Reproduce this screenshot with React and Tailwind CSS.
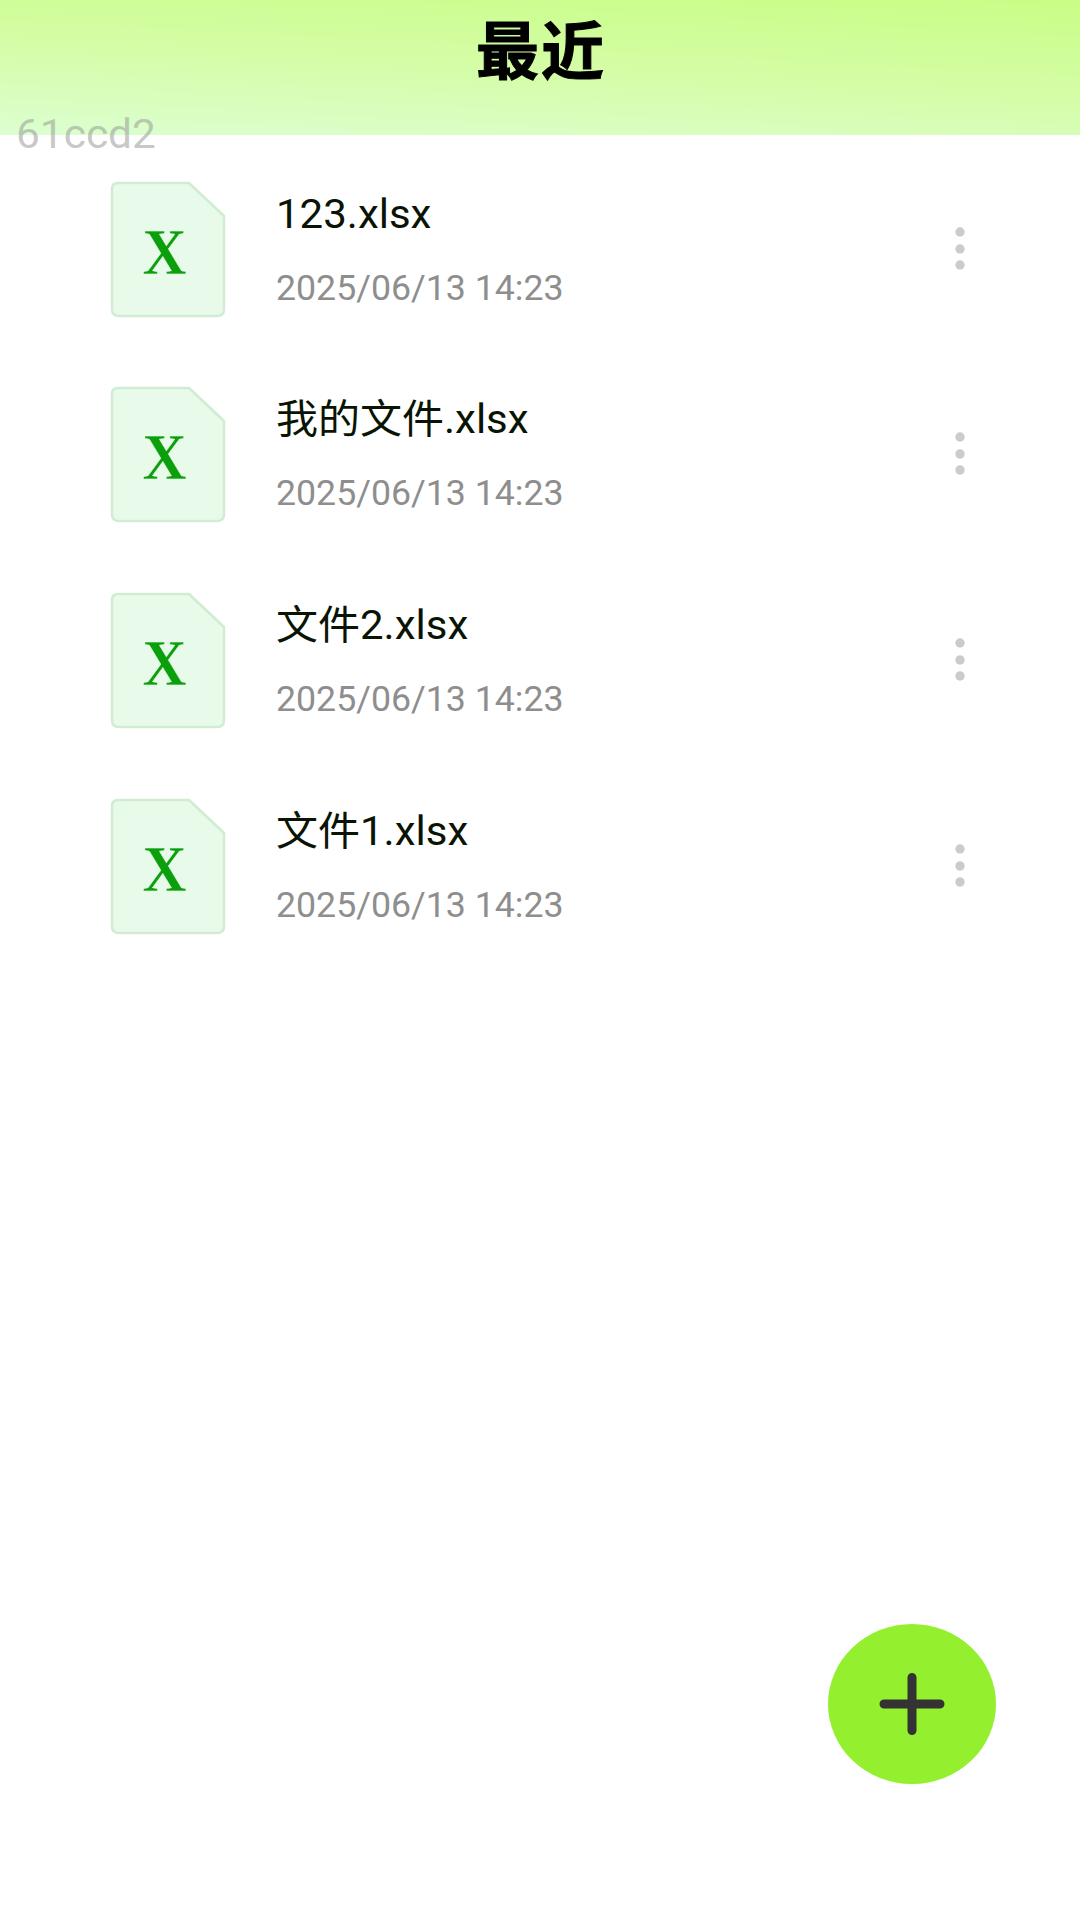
const FILES = [
  { id: 1, name: '123.xlsx', date: '2025/06/13 14:23' },
  { id: 2, name: '我的文件.xlsx', date: '2025/06/13 14:23' },
  { id: 3, name: '文件2.xlsx', date: '2025/06/13 14:23' },
  { id: 4, name: '文件1.xlsx', date: '2025/06/13 14:23' },
];

function SheetIcon() {
  return (
    <svg width="116" height="138" viewBox="0 0 116 138" className="shrink-0">
      <path
        d="M8 2H79L114 35V128Q114 135 107 135H9Q2 135 2 128V8Q2 2 8 2Z"
        fill="#e8faea"
        stroke="#d0edd2"
        strokeWidth="2.5"
        strokeLinejoin="round"
      />
      <text
        transform="translate(54.5 93) scale(0.94 1)"
        textAnchor="middle"
        fontSize="65"
        fontWeight="bold"
        fontFamily="Liberation Serif, serif"
        fill="#0c9f0c"
        stroke="#e8faea"
        strokeWidth="0.4"
      >
        X
      </text>
    </svg>
  );
}

function FileRow({ file }) {
  return (
    <li className="flex h-[205.7px] items-start pl-[110px] pr-[114px]">
      <SheetIcon />
      <div className="ml-[50px] flex flex-1 flex-col">
        <span className="mt-[8px] origin-left scale-y-[0.96] text-[42px] leading-[52px] text-[#0a1405]">
          {file.name}
        </span>
        <span className="mt-[25px] origin-left scale-y-[0.96] text-[35.7px] leading-[44px] text-[#8e8e8e]">
          {file.date}
        </span>
      </div>
      <button className="mt-[46px]">
        <svg width="12" height="44" viewBox="0 0 12 44" fill="#cacccb">
          <circle cx="6" cy="5" r="4.7" />
          <circle cx="6" cy="22" r="4.7" />
          <circle cx="6" cy="38" r="4.7" />
        </svg>
      </button>
    </li>
  );
}

export default function App() {
  return (
    <div className="relative h-[1920px] w-[1080px] overflow-hidden bg-white font-[Roboto,'Noto_Sans_CJK_SC',sans-serif]">
      <header className="h-[135px] bg-[linear-gradient(183deg,#c9fd86_0%,#d4fda6_50%,#dbffd0_100%)]">
        <h1 className="pl-[2px] pt-[6px] text-center text-[63px] font-bold leading-[94px] tracking-[2px] text-black [-webkit-text-stroke:1px_black]">
          最近
        </h1>
      </header>

      {/* Device tag, sits across the header edge */}
      <span className="absolute left-[16px] top-[109px] origin-left scale-x-[1.01] scale-y-[0.96] text-[42px] leading-[52px] text-[#999999]/55">
        61ccd2
      </span>

      <ul className="pt-[45.500px]">
        {FILES.map(file => (
          <FileRow key={file.id} file={file} />
        ))}
      </ul>

      {/* Floating add button */}
      <button className="absolute left-[828px] top-[1624px] flex h-[160px] w-[168px] items-center justify-center rounded-[50%] bg-[#94f02f]">
        <svg width="66" height="64" viewBox="0 0 66 64" stroke="#333333" strokeWidth="9" strokeLinecap="round">
          <path d="M5 32H61M33 5.500V58.500" />
        </svg>
      </button>
    </div>
  );
}
